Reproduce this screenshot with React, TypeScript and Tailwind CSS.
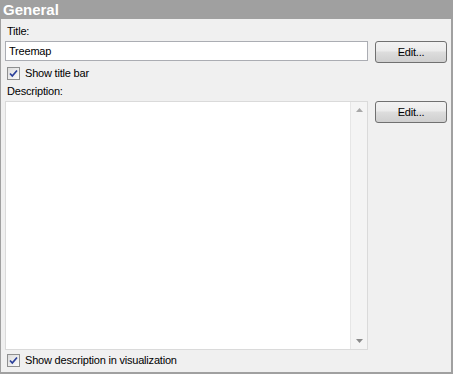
import React from "react";

function Check() {
  return (
    <div className="w-[13px] h-[13px] border border-[#8e8f8f] bg-gradient-to-br from-[#dcdcdc] to-[#fbfbfb] flex items-center justify-center shrink-0">
      <svg width="11" height="11" viewBox="0 0 11 11">
        <path d="M2 5.5 L4.3 8 L9 2.5" fill="none" stroke="#2a3f9a" strokeWidth="1.7" />
      </svg>
    </div>
  );
}

function EditButton() {
  return (
    <button className="w-[72px] h-[22px] rounded-[3px] border border-[#707070] bg-[linear-gradient(#f2f2f2_0%,#ebebeb_45%,#dddddd_50%,#cfcfcf_100%)] text-[11px] text-black flex items-center justify-center leading-none">
      Edit...
    </button>
  );
}

export default function App() {
  return (
    <div
      className="w-[453px] h-[374px] bg-[#f0f0f0] border-l border-r-2 border-b-2 border-[#a0a0a0] flex flex-col text-[11px] tracking-[-0.2px] text-black"
      style={{ fontFamily: '"Liberation Sans", Arial, sans-serif' }}
    >
      <div className="h-[19px] bg-[#a0a0a0] text-white font-bold text-[15px] tracking-normal leading-[19px] pl-[3px] -ml-px">General</div>
      <div className="flex-1 flex flex-col pl-[4px] pr-[4px]">
        <div className="mt-[5px] h-[15px] leading-[15px] pl-[2px]">Title:</div>
        <div className="flex items-start mt-[2px]">
          <div className="w-[364px] h-[20px] bg-white border border-[#abadb3] leading-[18px] pl-[3px]">Treemap</div>
          <div className="ml-[7px]"><EditButton /></div>
        </div>
        <div className="flex items-center mt-[4px] pl-[2px] h-[13px]">
          <Check />
          <span className="ml-[5px]">Show title bar</span>
        </div>
        <div className="mt-[4px] h-[15px] leading-[15px] pl-[2px]">Description:</div>
        <div className="flex items-start mt-[2px]">
          <div className="w-[364px] h-[249px] bg-white border border-[#dadada] flex justify-end">
            <div className="w-[17px] h-full bg-[#f4f4f4] border-l border-[#e6e6e6] flex flex-col justify-between items-center py-[6px]">
              <svg width="7" height="4" viewBox="0 0 7 4"><path d="M3.5 0 L7 4 L0 4 Z" fill="#a8a8a8" /></svg>
              <svg width="7" height="4" viewBox="0 0 7 4"><path d="M0 0 L7 0 L3.5 4 Z" fill="#8a8a8a" /></svg>
            </div>
          </div>
          <div className="ml-[7px]"><EditButton /></div>
        </div>
        <div className="flex items-center mt-[4px] pl-[2px] h-[13px]">
          <Check />
          <span className="ml-[5px]">Show description in visualization</span>
        </div>
      </div>
    </div>
  );
}
